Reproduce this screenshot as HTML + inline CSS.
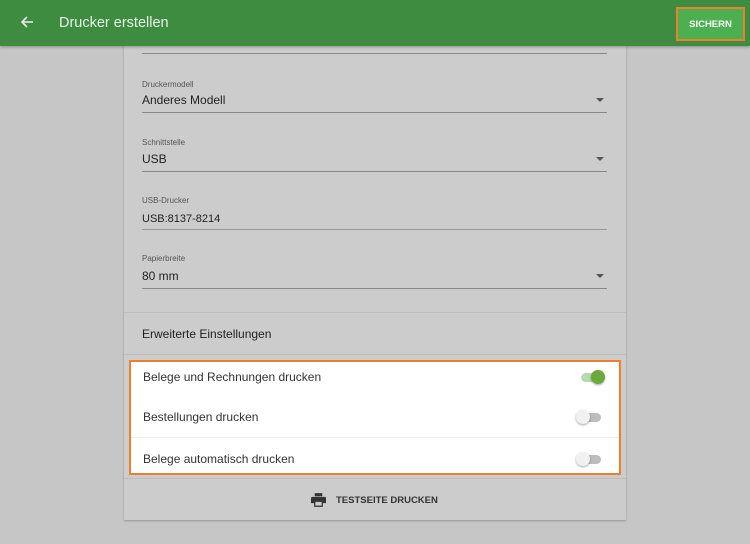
<!DOCTYPE html>
<html><head><style>
body{margin:0;width:750px;height:544px;background:#c6c6c6;font-family:"Liberation Sans",sans-serif;position:relative;overflow:hidden}
.hdr{position:absolute;left:0;top:0;width:750px;height:46px;background:#3d8c40;box-shadow:0 1px 3px rgba(0,0,0,.3);z-index:2}
.hdr .t{position:absolute;left:59px;top:15px;color:#e8f3e8;font-size:14.5px}
.hdr .b{position:absolute;left:19px;top:14px}
.save{position:absolute;left:676px;top:7px;width:65px;height:30px;border:2px solid #f07f2d;background:#4caf50;color:#fff;font-size:9.5px;font-weight:bold;text-align:center;line-height:31px}
.card{position:absolute;left:124px;top:30px;width:502px;height:490px;background:#cccccc;box-shadow:0 1px 2px rgba(0,0,0,.25)}
.a{position:absolute;font-size:12px;color:#222}
.l{position:absolute;font-size:8px;color:#555}
.u{position:absolute;left:142px;width:465px;height:1px;background:#888}
.arr{position:absolute;left:596px;width:0;height:0;border-left:4px solid transparent;border-right:4px solid transparent;border-top:4px solid #555}
.div{position:absolute;left:124px;width:502px;height:1px;background:#bdbdbd}
.box{position:absolute;left:129px;top:360px;width:488px;height:111px;border:2px solid #f07f2d;background:#fff}
.row{position:absolute;left:12px;font-size:12px;color:#333}
.tr{position:absolute;width:20px;height:9px;border-radius:5px;background:#bdbdbd}
.th{position:absolute;width:14px;height:14px;border-radius:50%;background:#f1f1f1;box-shadow:0 1px 2px rgba(0,0,0,.35)}
</style></head><body>
<div class="card"></div>
<div class="u" style="top:53px"></div>
<div class="l" style="left:142px;top:80px">Druckermodell</div>
<div class="a" style="left:142px;top:93px">Anderes Modell</div>
<div class="arr" style="top:98px"></div>
<div class="u" style="top:112px"></div>
<div class="l" style="left:142px;top:138px">Schnittstelle</div>
<div class="a" style="left:142px;top:152px">USB</div>
<div class="arr" style="top:157px"></div>
<div class="u" style="top:171px"></div>
<div class="l" style="left:142px;top:196px">USB-Drucker</div>
<div class="a" style="left:142px;top:213px;font-size:11px">USB:8137-8214</div>
<div class="u" style="top:229px;background:#999"></div>
<div class="l" style="left:142px;top:254px">Papierbreite</div>
<div class="a" style="left:142px;top:269px">80 mm</div>
<div class="arr" style="top:274px"></div>
<div class="u" style="top:288px"></div>
<div class="div" style="top:312px"></div>
<div class="a" style="left:142px;top:327px">Erweiterte Einstellungen</div>
<div class="div" style="top:354px"></div>
<div class="box">
<div class="row" style="top:8px">Belege und Rechnungen drucken</div>
<div class="tr" style="left:450px;top:11px;background:#b5dcb0"></div><div class="th" style="left:460px;top:8px;background:#6aaa3a"></div>
<div class="row" style="top:48px">Bestellungen drucken</div>
<div class="tr" style="left:450px;top:51px"></div><div class="th" style="left:445px;top:48px"></div>
<div style="position:absolute;left:0;top:75px;width:488px;height:1px;background:#eee"></div>
<div class="row" style="top:90px">Belege automatisch drucken</div>
<div class="tr" style="left:450px;top:93px"></div><div class="th" style="left:445px;top:90px"></div>
</div>
<div class="div" style="top:478px"></div>
<svg style="position:absolute;left:311px;top:493px" width="15" height="14" viewBox="0 0 24 22"><path d="M6 0h12v5H6zM2 6h20a2 2 0 0 1 2 2v8h-5v6H5v-6H0V8a2 2 0 0 1 2-2zM7 14v6h10v-6z" fill="#333"/></svg>
<div class="a" style="left:336px;top:495px;font-size:9.5px;font-weight:bold;color:#333">TESTSEITE DRUCKEN</div>
<div class="hdr">
<svg class="b" width="16" height="16" viewBox="0 0 16 16"><path d="M14 8H3M8 3L3 8l5 5" stroke="#e8f3e8" stroke-width="1.6" fill="none"/></svg>
<div class="t">Drucker erstellen</div>
<div class="save">SICHERN</div>
</div>
</body></html>
